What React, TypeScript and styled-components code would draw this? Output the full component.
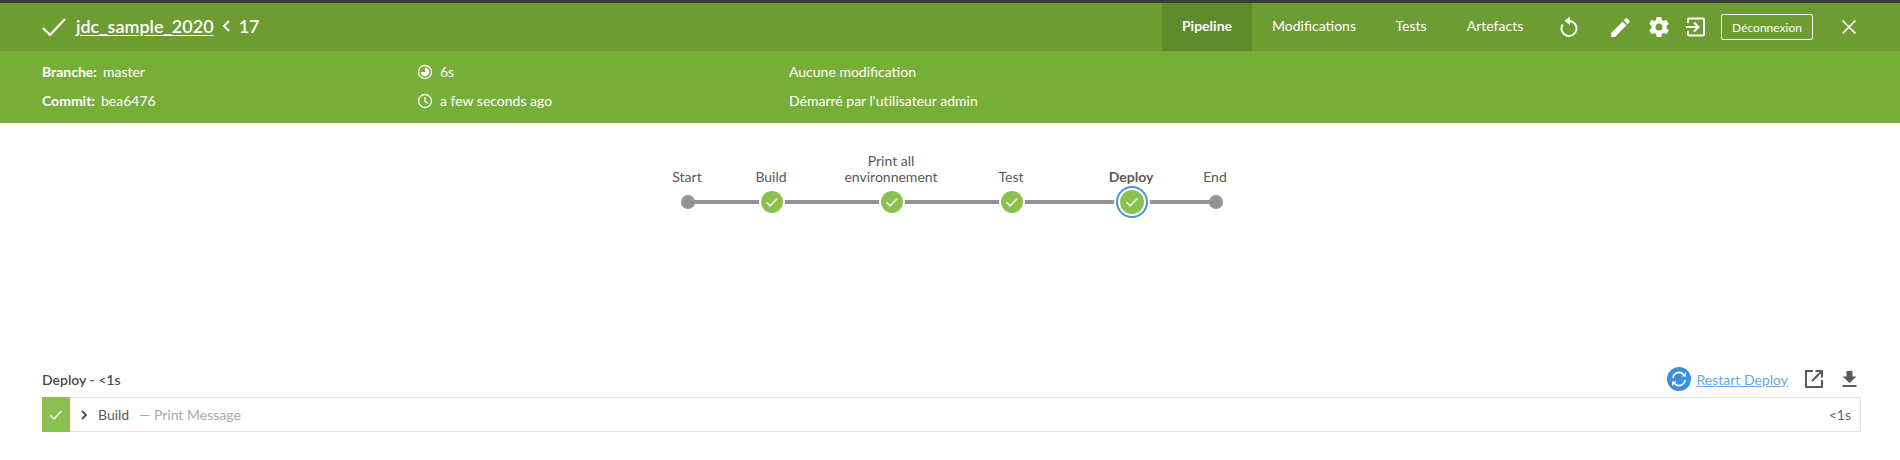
import React from "react";
import styled, { createGlobalStyle } from "styled-components";

const Global = createGlobalStyle`
  html, body { margin: 0; padding: 0; background: #fff; }
  body { font-family: Lato, "Liberation Sans", sans-serif; font-size: 14px; color: #595959; }
`;
const Page = styled.div`
  width: 1900px;
  height: 460px;
  overflow: hidden;
  background: #fff;
  border-top: 3px solid #3a3d38;
  box-sizing: border-box;
`;
const TopBar = styled.header`
  height: 48px;
  background: #6d9c32;
  color: #fff;
  display: flex;
  align-items: stretch;
  padding-left: 42px;
`;
const TitleGroup = styled.div`
  display: flex;
  align-items: center;
  flex: 1;
  font-size: 18px;
  font-weight: 600;
  padding-bottom: 2px;
`;
const TitleLink = styled.a`
  color: #fff;
  text-decoration: underline;
  text-underline-offset: 2px;
  margin-left: 10px;
`;
const RunNumber = styled.span`
  margin-left: 8px;
  display: flex;
  align-items: center;
  gap: 9px;
`;
const Tabs = styled.nav`
  display: flex;
`;
const Tab = styled.a<{ $active?: boolean; $w: number }>`
  width: ${(p) => p.$w}px;
  display: flex;
  align-items: center;
  justify-content: center;
  padding-bottom: 3px;
  box-sizing: border-box;
  font-size: 14px;
  color: #fff;
  font-weight: ${(p) => (p.$active ? 700 : 400)};
  background: ${(p) => (p.$active ? "#5f8a2c" : "transparent")};
`;
const Actions = styled.div`
  display: flex;
  align-items: center;
  padding-right: 43px;
`;
const IconSlot = styled.span<{ $w: number }>`
  width: ${(p) => p.$w}px;
  display: flex;
  align-items: center;
  justify-content: center;
`;
const Logout = styled.button`
  width: 92px;
  height: 26px;
  margin-left: 1px;
  margin-right: 28px;
  border: 1px solid #fff;
  border-radius: 2px;
  background: transparent;
  color: #fff;
  font: 12px Lato, sans-serif;
  padding: 0;
`;
const SubBar = styled.section`
  height: 72px;
  background: #77ae38;
  color: #fff;
  display: grid;
  grid-template-columns: 375px 372px 1fr;
  padding: 6px 42px 0;
  box-sizing: border-box;
  font-size: 14px;
`;
const InfoColumn = styled.div`
  display: flex;
  flex-direction: column;
`;
const InfoRow = styled.div`
  height: 29px;
  display: flex;
  align-items: center;
  gap: 6px;
`;
const InfoLabel = styled.strong`
  font-weight: 700;
`;
const InfoValue = styled.span`
  margin-left: 1px;
`;
const Graph = styled.svg`
  display: block;
  width: 1900px;
  height: 241px;
`;
const NodeLabel = styled.text<{ $bold?: boolean }>`
  font-family: Lato, sans-serif;
  font-size: 14px;
  fill: #595959;
  text-anchor: middle;
  font-weight: ${(p) => (p.$bold ? 700 : 400)};
`;
const StepSection = styled.section`
  padding: 0 39px 0 42px;
`;
const StepHeader = styled.div`
  height: 30px;
  display: flex;
  align-items: center;
  justify-content: space-between;
`;
const StepTitle = styled.div`
  font-size: 14px;
  font-weight: 600;
  color: #4a4a4a;
`;
const StepTools = styled.div`
  display: flex;
  align-items: center;
  margin-right: 4px;
`;
const RestartLink = styled.a`
  color: #6ba6e6;
  text-decoration: underline;
  font-size: 14px;
  margin-left: 6px;
  margin-right: 16px;
`;
const DownloadIcon = styled.svg`
  margin-left: 18px;
`;
const LogRow = styled.div`
  height: 35px;
  margin-top: 3px;
  border: 1px solid #e2e2e2;
  border-left: none;
  box-sizing: border-box;
  display: flex;
  align-items: center;
`;
const StatusCell = styled.div`
  width: 28px;
  height: 35px;
  margin-top: -1px;
  margin-bottom: -1px;
  background: #8cc04f;
  display: flex;
  align-items: center;
  justify-content: center;
`;
const Caret = styled.svg`
  margin-left: 11px;
  margin-right: 11px;
`;
const LogName = styled.span`
  color: #595959;
`;
const LogDesc = styled.span`
  color: #a9a9a9;
  margin-left: 10px;
  flex: 1;
`;
const LogTime = styled.span`
  color: #666;
  margin-right: 9px;
`;

const Check = ({ x, y }: { x: number; y: number }) => (
  <path
    d={`M${x - 5.5} ${y + 0.2}L${x - 1.8} ${y + 3.8}L${x + 5.5} ${y - 3.6}`}
    fill="none"
    stroke="#fff"
    strokeWidth={1.4}
  />
);

const LINE = "#949393";
const GREEN = "#8cc04f";

const PipelineGraph = () => (
  <Graph viewBox="0 123 1900 241">
    <line x1={688} x2={1216} y1={202} y2={202} stroke={LINE} strokeWidth={4} />
    <circle cx={688} cy={202} r={7} fill={LINE} />
    <circle cx={1216} cy={202} r={7} fill={LINE} />
    {[772, 892, 1012].map((x) => (
      <g key={x}>
        <circle cx={x} cy={202} r={13} fill="#fff" />
        <circle cx={x} cy={202} r={11} fill={GREEN} />
        <Check x={x} y={202} />
      </g>
    ))}
    <circle cx={1132} cy={202} r={18} fill="#fff" />
    <circle cx={1132} cy={202} r={15} fill="#fff" stroke="#4a90e2" strokeWidth={2} />
    <circle cx={1132} cy={202} r={12} fill={GREEN} />
    <Check x={1132} y={202} />
    <NodeLabel x={687} y={182}>Start</NodeLabel>
    <NodeLabel x={771} y={182}>Build</NodeLabel>
    <NodeLabel x={891} y={166}>Print all</NodeLabel>
    <NodeLabel x={891} y={182}>environnement</NodeLabel>
    <NodeLabel x={1011} y={182}>Test</NodeLabel>
    <NodeLabel x={1131} y={182} $bold>Deploy</NodeLabel>
    <NodeLabel x={1215} y={182}>End</NodeLabel>
  </Graph>
);

export default function App() {
  return (
    <Page>
      <Global />
      <TopBar>
        <TitleGroup>
          <svg width="24" height="21" viewBox="0 0 24 21">
            <path d="M1 12L8 19L23 3" fill="none" stroke="#fff" strokeWidth="2.2" />
          </svg>
          <TitleLink>jdc_sample_2020</TitleLink>
          <RunNumber>
            <svg width="8" height="12" viewBox="0 0 8 12">
              <path d="M7 1L2 6L7 11" fill="none" stroke="#fff" strokeWidth="1.8" />
            </svg>
            17
          </RunNumber>
        </TitleGroup>
        <Tabs>
          <Tab $active $w={90}>Pipeline</Tab>
          <Tab $w={124}>Modifications</Tab>
          <Tab $w={70}>Tests</Tab>
          <Tab $w={98}>Artefacts</Tab>
        </Tabs>
        <Actions>
          <IconSlot $w={50}>
            <svg width="18" height="24" viewBox="0 0 18 24">
              <path d="M9 6A7.5 7.5 0 1 1 2.6 9.6" fill="none" stroke="#fff" strokeWidth="1.9" />
              <path d="M10 1.5V10L4.5 5.8Z" fill="#fff" />
            </svg>
          </IconSlot>
          <IconSlot $w={52}>
            <svg width="25" height="25" viewBox="0 0 24 24" fill="#fff">
              <path d="M3 17.25V21h3.75L17.81 9.94l-3.75-3.75L3 17.25zM20.71 7.04a1 1 0 0 0 0-1.41l-2.34-2.34a1 1 0 0 0-1.41 0l-1.83 1.83 3.75 3.75 1.83-1.83z" />
            </svg>
          </IconSlot>
          <IconSlot $w={26}>
            <svg width="24" height="24" viewBox="0 0 24 24" fill="#fff">
              <path d="M19.43 12.98c.04-.32.07-.64.07-.98s-.03-.66-.07-.98l2.11-1.65a.5.5 0 0 0 .12-.64l-2-3.46a.5.5 0 0 0-.61-.22l-2.49 1a7.3 7.3 0 0 0-1.69-.98l-.38-2.65A.49.49 0 0 0 14 2h-4a.49.49 0 0 0-.49.42l-.38 2.65c-.61.25-1.17.59-1.69.98l-2.49-1a.5.5 0 0 0-.61.22l-2 3.46a.49.49 0 0 0 .12.64l2.11 1.65c-.04.32-.07.65-.07.98s.03.66.07.98l-2.11 1.65a.5.5 0 0 0-.12.64l2 3.46c.12.22.39.3.61.22l2.49-1c.52.4 1.08.73 1.69.98l.38 2.65c.03.24.24.42.49.42h4c.25 0 .46-.18.49-.42l.38-2.65c.61-.25 1.17-.59 1.69-.98l2.49 1c.23.09.49 0 .61-.22l2-3.46a.5.5 0 0 0-.12-.64l-2.11-1.65zM12 15.5a3.5 3.5 0 1 1 0-7 3.5 3.5 0 0 1 0 7z" />
            </svg>
          </IconSlot>
          <IconSlot $w={48}>
            <svg width="20" height="20" viewBox="0 0 20 20" fill="none" stroke="#fff" strokeWidth="2">
              <path d="M2 6V2.5Q2 1.5 3 1.5H17Q18 1.5 18 2.5V17.5Q18 18.5 17 18.5H3Q2 18.5 2 17.5V14" />
              <path d="M0 10H12M8 5.5L12.5 10L8 14.5" />
            </svg>
          </IconSlot>
          <Logout>Déconnexion</Logout>
          <svg width="16" height="16" viewBox="0 0 16 16">
            <path d="M1.5 1.5L14.5 14.5M14.5 1.5L1.5 14.5" stroke="#fff" strokeWidth="1.7" />
          </svg>
        </Actions>
      </TopBar>
      <SubBar>
        <InfoColumn>
          <InfoRow><InfoLabel>Branche:</InfoLabel> master</InfoRow>
          <InfoRow><InfoLabel>Commit:</InfoLabel> bea6476</InfoRow>
        </InfoColumn>
        <InfoColumn>
          <InfoRow>
            <svg width="16" height="16" viewBox="0 0 16 16" fill="none">
              <circle cx="8" cy="8" r="6.5" stroke="#fff" strokeWidth="1.3" />
              <path d="M8 3.8A4.2 4.2 0 1 1 3.8 8H8Z" fill="#fff" />
            </svg>
            <InfoValue>6s</InfoValue>
          </InfoRow>
          <InfoRow>
            <svg width="16" height="16" viewBox="0 0 16 16" fill="none" stroke="#fff" strokeWidth="1.3">
              <circle cx="8" cy="8" r="6.5" />
              <path d="M8 4V8.5L11 10.5" />
            </svg>
            <InfoValue>a few seconds ago</InfoValue>
          </InfoRow>
        </InfoColumn>
        <InfoColumn>
          <InfoRow>Aucune modification</InfoRow>
          <InfoRow>Démarré par l'utilisateur admin</InfoRow>
        </InfoColumn>
      </SubBar>
      <PipelineGraph />
      <StepSection>
        <StepHeader>
          <StepTitle>Deploy - &lt;1s</StepTitle>
          <StepTools>
            <svg width="24" height="24" viewBox="0 0 24 24">
              <circle cx="12" cy="12" r="12" fill="#3d8fd9" />
              <path d="M6 11A6 6 0 0 1 16.5 7.5M18 13A6 6 0 0 1 7.5 16.5" fill="none" stroke="#fff" strokeWidth="1.6" />
              <path d="M14.5 9.5H19V5ZM9.5 14.5H5V19Z" fill="#fff" />
            </svg>
            <RestartLink>Restart Deploy</RestartLink>
            <svg width="20" height="20" viewBox="0 0 20 20" fill="none" stroke="#5a5a5a" strokeWidth="2">
              <path d="M9 2H2V18H18V11" />
              <path d="M8 12L18 2M11.5 2H18V8.5" />
            </svg>
            <DownloadIcon width="15" height="16" viewBox="0 0 15 16" fill="#5a5a5a">
              <path d="M4.5 0H10.5V5.5H14.5L7.5 12L0.5 5.5H4.5ZM0.5 14H14.5V16H0.5Z" />
            </DownloadIcon>
          </StepTools>
        </StepHeader>
        <LogRow>
          <StatusCell>
            <svg width="14" height="12" viewBox="0 0 14 12">
              <path d="M1.5 6.5L5 10L12.5 2" fill="none" stroke="#fff" strokeWidth="1.3" />
            </svg>
          </StatusCell>
          <Caret width="6" height="10" viewBox="0 0 6 10">
            <path d="M1 1L5 5L1 9" fill="none" stroke="#4a4a4a" strokeWidth="1.8" />
          </Caret>
          <LogName>Build</LogName>
          <LogDesc>— Print Message</LogDesc>
          <LogTime>&lt;1s</LogTime>
        </LogRow>
      </StepSection>
    </Page>
  );
}
